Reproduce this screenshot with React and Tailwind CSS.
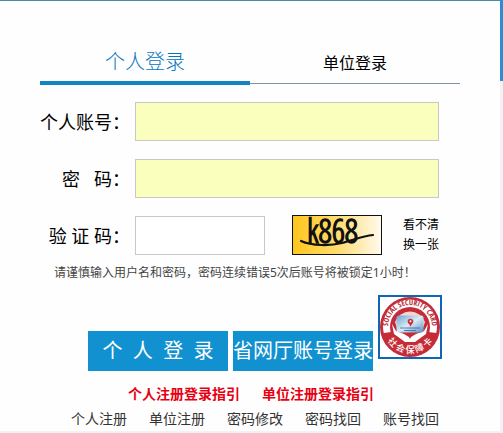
const fieldClass =
  'h-[39px] min-w-0 border border-[#c8c8c8] px-2 text-base text-black outline-none'

const guideLinks = ['个人注册登录指引', '单位注册登录指引']
const accountLinks = ['个人注册', '单位注册', '密码修改', '密码找回', '账号找回']

function FieldRow({ id, label, children }) {
  return (
    <div className="flex h-[39px] items-end gap-[5px]">
      <label
        htmlFor={id}
        className="w-[90px] shrink-0 whitespace-nowrap text-right text-lg leading-[38px]"
      >
        {label}
      </label>
      {children}
    </div>
  )
}

function Captcha() {
  return (
    <svg
      className="ml-[22px] h-10 w-[90px] shrink-0 overflow-visible"
      viewBox="0 0 90 40"
      role="img"
      aria-label="验证码"
    >
      <defs>
        <linearGradient id="captchaFill" x1="0" x2="1" y1="0" y2="0">
          <stop offset="0" stopColor="#ffc61a" />
          <stop offset="0.5" stopColor="#ffdc6e" />
          <stop offset="1" stopColor="#fffaf0" />
        </linearGradient>
      </defs>
      <rect x="0.5" y="0.5" width="89" height="39" fill="url(#captchaFill)" stroke="#111" />
      <text
        x="15"
        y="28"
        fontSize="33"
        fontWeight="300"
        fill="#111"
        stroke="#111"
        strokeWidth="1.4"
        fontFamily="'Open Sans Condensed Light', 'Open Sans Condensed', sans-serif"
      >
        k868
      </text>
      <path
        d="M9 26 C20 31 38 31 50 28 C62 25 70 21 81 20"
        fill="none"
        stroke="#111"
        strokeWidth="2.2"
        strokeLinecap="round"
      />
    </svg>
  )
}

function SocialCardEmblem() {
  return (
    <svg className="h-full w-full" viewBox="0 0 60 60" role="img" aria-label="社会保障卡">
      <defs>
        <path id="emblemTop" d="M9.5 38 A22 22 0 1 1 50.5 38" />
        <path id="emblemBottom" d="M4 36 A26.8 26.8 0 0 0 56 36" />
        <linearGradient id="emblemCard" x1="0" x2="1" y1="0" y2="1">
          <stop offset="0" stopColor="#6fa3d0" />
          <stop offset="0.5" stopColor="#d8ecf7" />
          <stop offset="1" stopColor="#5b8fc4" />
        </linearGradient>
      </defs>
      <circle cx="30" cy="30" r="30" fill="#c62c38" />
      <path
        d="M3.8 36 A27 27 0 1 1 56.2 36 L48.5 35 A19 19 0 1 0 11.5 35 Z"
        fill="#fff"
      />
      <circle cx="30" cy="30" r="20" fill="#c62c38" />
      <path
        d="M15 25 A16 16 0 0 1 45 25 L43 31 H17 Z"
        fill="#f6d5d5"
      />
      <path
        d="M12 27 L16 34 L24 37 L29 40 L30 42 L31 40 L36 37 L44 34 L48 27 L46 37 L39 42 L35 45 H25 L21 42 L14 37 Z"
        fill="#fff"
      />
      <rect x="16.5" y="18.5" width="27" height="17" rx="2.5" fill="url(#emblemCard)" />
      <path d="M20 31 H40 M24 33.5 H36" stroke="#35679f" strokeWidth="0.8" />
      <circle cx="30.5" cy="24.5" r="2.8" fill="#d52c36" />
      <circle cx="30.5" cy="24.2" r="1" fill="#fff" />
      <path d="M29 27 L30.5 29.5 L32 27" fill="#d52c36" />
      <text
        fontSize="7.6"
        fontWeight="700"
        fill="#b92a35"
        fontFamily="'Open Sans Condensed', 'Liberation Sans', sans-serif"
        textAnchor="middle"
      >
        <textPath href="#emblemTop" startOffset="50%">
          SOCIAL SECURITY CARD
        </textPath>
      </text>
      <text
        fontSize="9"
        fontWeight="500"
        fill="#fff"
        fontFamily="'Noto Sans CJK SC', sans-serif"
        textAnchor="middle"
      >
        <textPath href="#emblemBottom" startOffset="50%">
          社 会 保 障 卡
        </textPath>
      </text>
    </svg>
  )
}

export default function App() {
  return (
    <div
      lang="zh-CN"
      className="bg-[#f0f2f8] pb-[2px] font-['Noto_Sans','Noto_Sans_CJK_SC',sans-serif] text-black"
    >
      <div className="flex">
        <main className="min-w-0 flex-1 border-t border-[#4a8aa6] bg-[#fefefe] px-10 pt-[42px] pb-[2px]">
          <div className="flex items-start" role="tablist">
            <button
              type="button"
              role="tab"
              aria-selected="true"
              className="h-[42px] flex-1 border-b-4 border-[#1283c3] text-xl leading-[38px] font-light text-[#0576bb]"
            >
              个人登录
            </button>
            <button
              type="button"
              role="tab"
              aria-selected="false"
              className="h-[41px] flex-1 border-b border-[#8494a4] text-base leading-[38px]"
            >
              单位登录
            </button>
          </div>

          <form className="mt-[17px]" onSubmit={(e) => e.preventDefault()}>
            <div className="flex flex-col gap-[18px] pr-[21px]">
              <FieldRow id="account" label="个人账号：">
                <input id="account" type="text" className={`${fieldClass} flex-1 bg-[#faffbd]`} />
              </FieldRow>
              <FieldRow id="password" label={'密\u00a0\u00a0\u00a0码：'}>
                <input
                  id="password"
                  type="password"
                  className={`${fieldClass} flex-1 bg-[#faffbd]`}
                />
              </FieldRow>
              <FieldRow id="captcha" label={'验\u00a0证\u00a0码：'}>
                <input id="captcha" type="text" className={`${fieldClass} w-[130px] bg-white`} />
                <Captcha />
                <button type="button" className="ml-auto w-9 shrink-0 text-xs leading-5">
                  看不清
                  <br />
                  换一张
                </button>
              </FieldRow>
            </div>

            <p className="mt-2 pl-[14px] text-xs leading-5 whitespace-nowrap text-[#444]">
              请谨慎输入用户名和密码，密码连续错误5次后账号将被锁定1小时！
            </p>

            <div className="mt-3 flex items-end gap-[5px] pl-12">
              <button
                type="submit"
                className="h-10 w-[140px] shrink-0 bg-[#1191d0] text-xl whitespace-nowrap text-white"
              >
                {'个\u00a0\u00a0人\u00a0\u00a0登\u00a0\u00a0录'}
              </button>
              <button
                type="button"
                className="h-10 w-[140px] shrink-0 bg-[#1191d0] text-xl whitespace-nowrap text-white"
              >
                省网厅账号登录
              </button>
              <a href="#card" className="mb-3 block size-16 shrink-0 border-2 border-[#0f66b2] bg-white">
                <SocialCardEmblem />
              </a>
            </div>
          </form>

          <nav className="mt-[13px] flex gap-[22px] pl-[88px] text-sm leading-5 font-bold whitespace-nowrap text-[#e60012]">
            {guideLinks.map((text) => (
              <a key={text} href="#guide">
                {text}
              </a>
            ))}
          </nav>
          <nav className="mt-[5px] flex gap-[22px] pl-[31px] text-sm leading-5 whitespace-nowrap text-[#333]">
            {accountLinks.map((text) => (
              <a key={text} href="#account">
                {text}
              </a>
            ))}
          </nav>
        </main>
        <div className="w-[3px] shrink-0">
          <div className="h-[81px] bg-[#2a8fd0]" />
        </div>
      </div>
    </div>
  )
}
